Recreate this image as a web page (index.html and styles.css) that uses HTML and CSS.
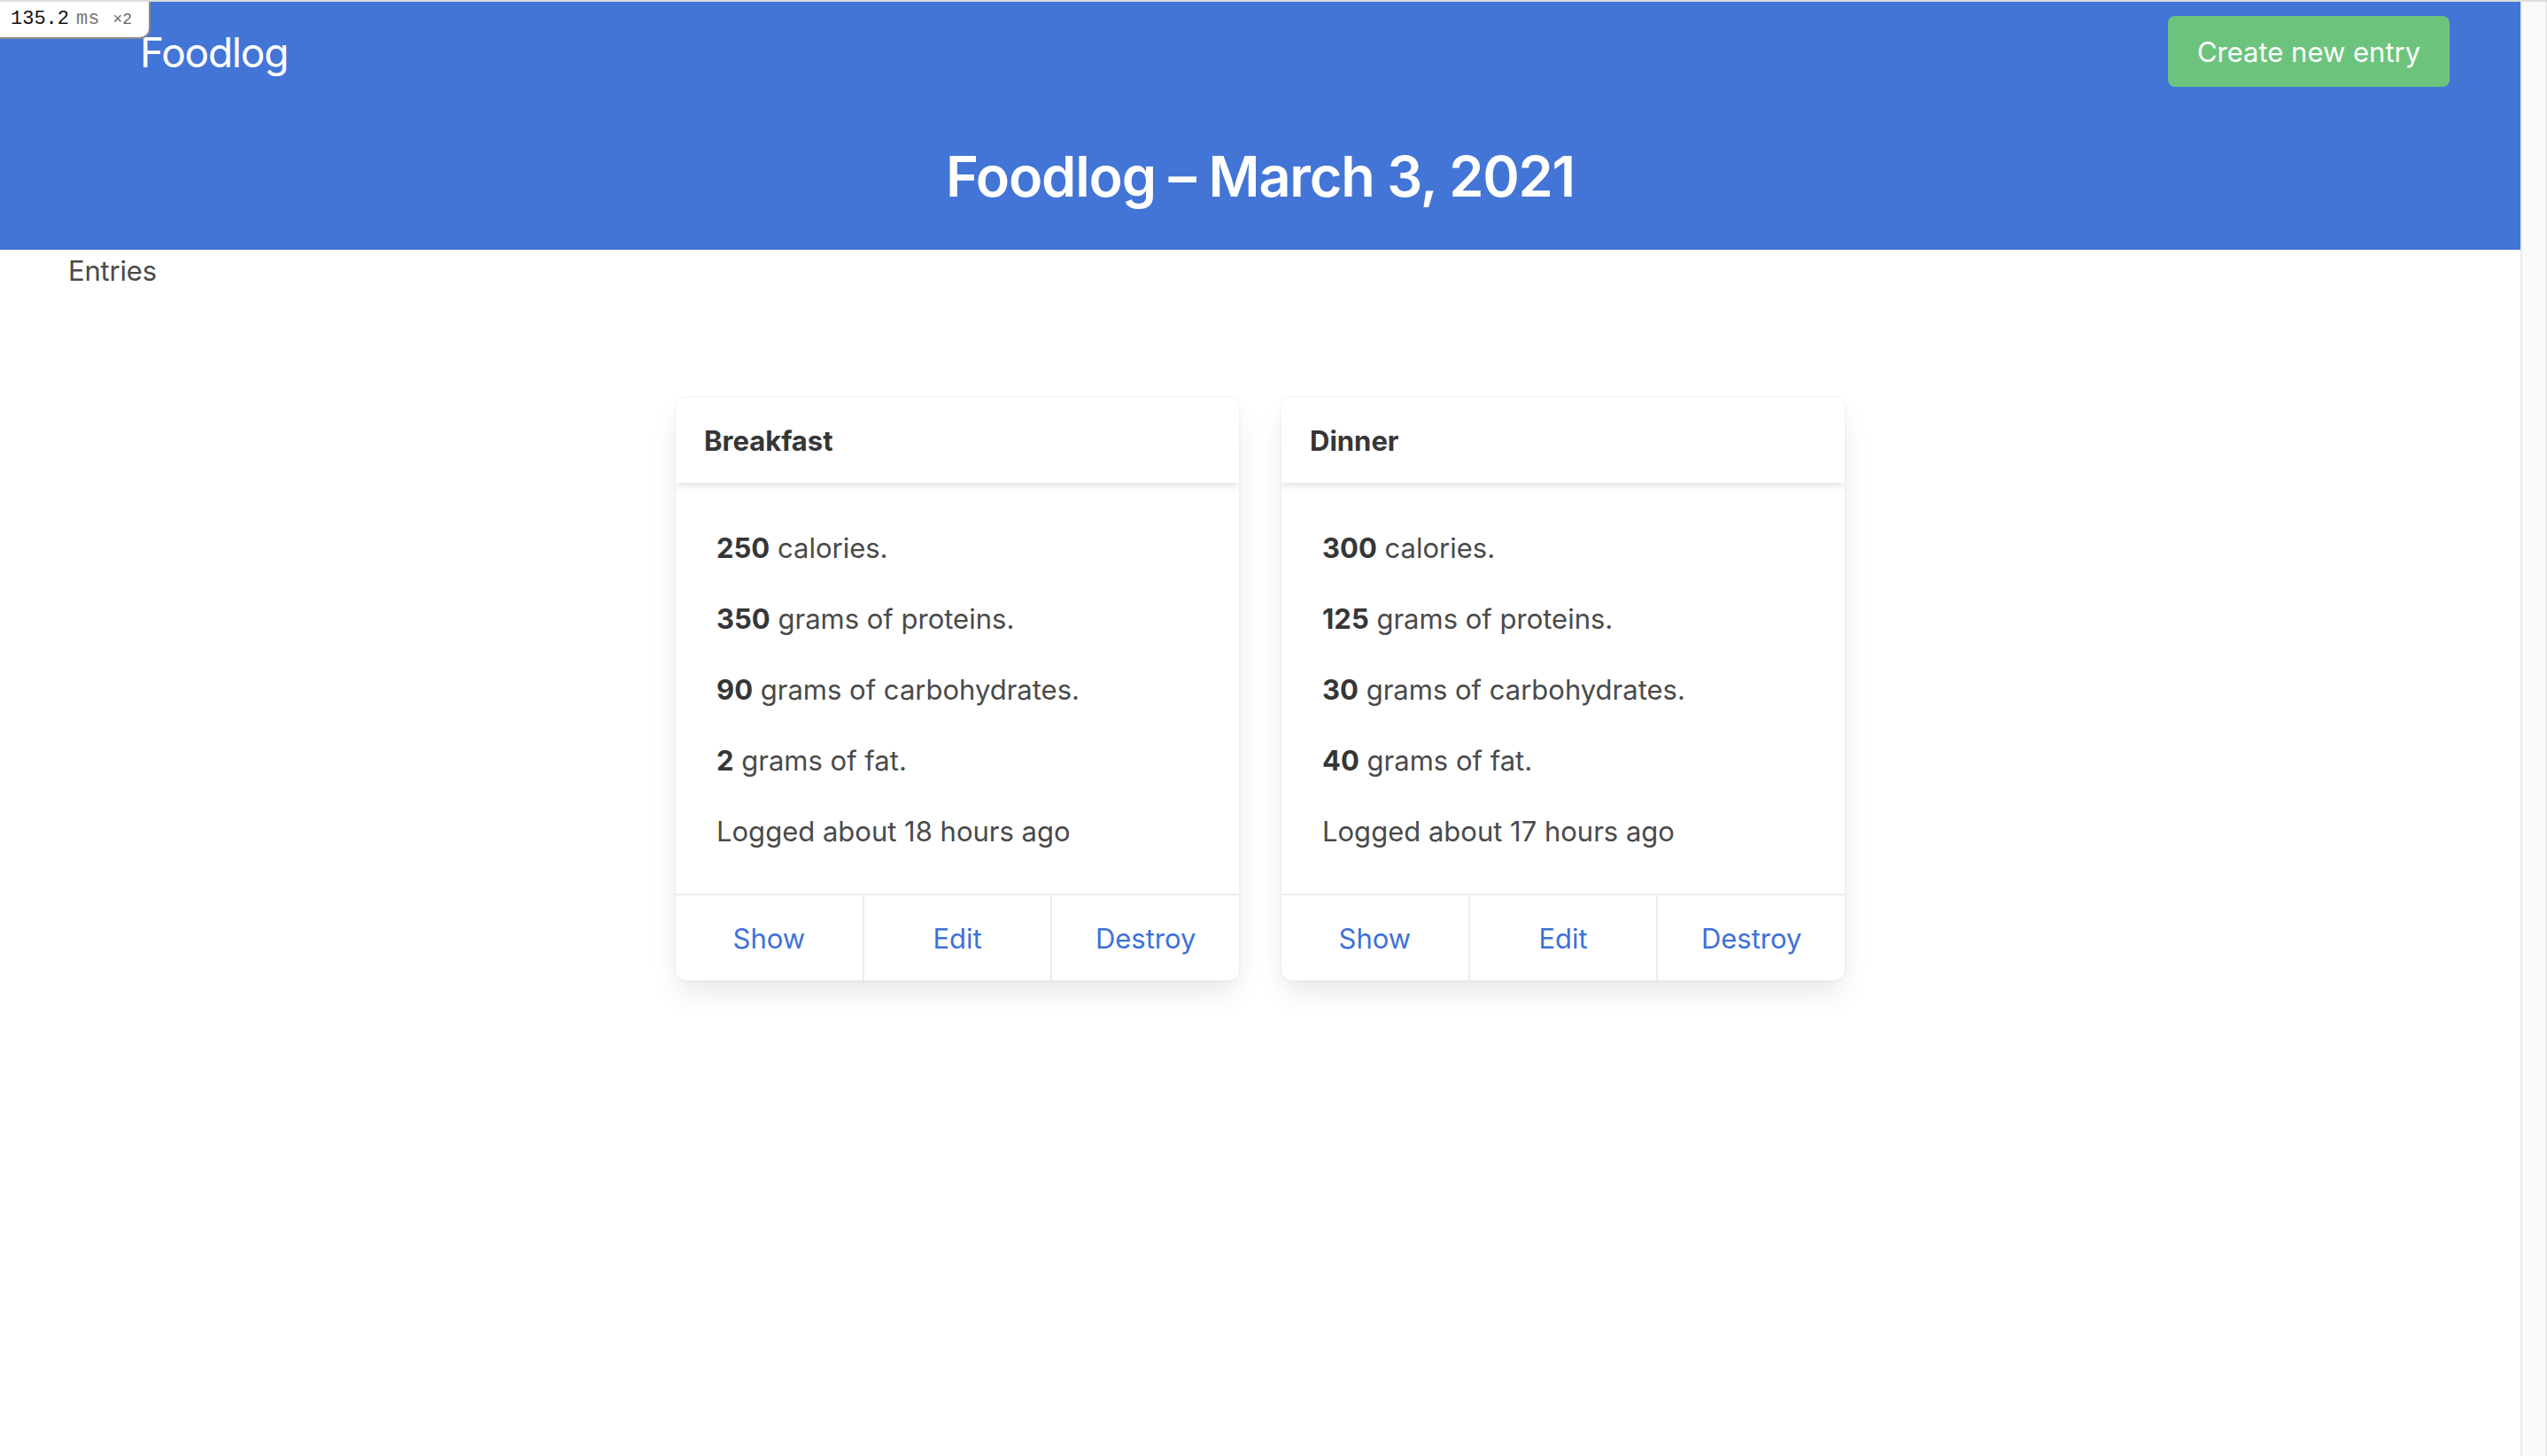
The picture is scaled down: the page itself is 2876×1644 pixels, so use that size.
FILE: index.html
```html
<!DOCTYPE html>
<html lang="en">
<head>
<meta charset="utf-8">
<title>Foodlog</title>
<link rel="stylesheet" href="styles.css">
</head>
<body>
<div class="timer"><span class="ms-val">135.2</span><span class="ms-unit">ms</span><span class="ms-x">×2</span></div>
<div class="page">
  <main class="main">
    <header class="hero">
      <div class="topbar">
        <a class="brand" href="#">Foodlog</a>
        <a class="btn-create" href="#">Create new entry</a>
      </div>
      <h1 class="hero-title">Foodlog – March 3, 2021</h1>
    </header>
    <p class="entries-label">Entries</p>
    <section class="cards">
      <article class="card">
        <div class="card-header">Breakfast</div>
        <div class="card-content">
          <p><strong>250</strong> calories.</p>
          <p><strong>350</strong> grams of proteins.</p>
          <p><strong>90</strong> grams of carbohydrates.</p>
          <p><strong>2</strong> grams of fat.</p>
          <p>Logged about 18 hours ago</p>
        </div>
        <div class="card-footer">
          <a class="footer-item" href="#">Show</a>
          <a class="footer-item" href="#">Edit</a>
          <a class="footer-item" href="#">Destroy</a>
        </div>
      </article>
      <article class="card">
        <div class="card-header">Dinner</div>
        <div class="card-content">
          <p><strong>300</strong> calories.</p>
          <p><strong>125</strong> grams of proteins.</p>
          <p><strong>30</strong> grams of carbohydrates.</p>
          <p><strong>40</strong> grams of fat.</p>
          <p>Logged about 17 hours ago</p>
        </div>
        <div class="card-footer">
          <a class="footer-item" href="#">Show</a>
          <a class="footer-item" href="#">Edit</a>
          <a class="footer-item" href="#">Destroy</a>
        </div>
      </article>
    </section>
  </main>
  <div class="scrollbar"></div>
</div>
</body>
</html>
```

FILE: styles.css
```css
html, body {
  margin: 0;
  padding: 0;
  height: 100%;
}
body {
  font-family: Inter, "Noto Sans", "Liberation Sans", sans-serif;
  color: #4a4a4a;
  background: #ffffff;
  border-top: 2px solid #dcdcdf;
  box-sizing: border-box;
}
.page {
  display: flex;
  min-height: 1642px;
}
.main {
  flex: 1;
  min-width: 0;
}
.scrollbar {
  width: 26px;
  flex: none;
  background: #fafafa;
  border-left: 2px solid #e8e8e8;
  border-right: 2px solid #e8e8e8;
}
.timer {
  position: absolute;
  top: 2px;
  left: 0;
  width: 156px;
  height: 40px;
  background: #fff;
  border-right: 2px solid #8a8a8a;
  border-bottom: 2px solid #8a8a8a;
  border-bottom-right-radius: 12px;
  display: flex;
  align-items: baseline;
  padding: 0 0 0 12px;
  box-sizing: content-box;
  z-index: 10;
  line-height: 40px;
}
.ms-val {
  font-family: "Liberation Mono", monospace;
  font-size: 22px;
  color: #111;
  margin-right: 8px;
}
.ms-unit {
  font-family: "Liberation Mono", monospace;
  font-size: 22px;
  color: #777;
  margin-right: 15px;
}
.ms-x {
  font-family: "Liberation Mono", monospace;
  font-size: 18px;
  color: #666;
}
.hero {
  background: #4375d6;
  height: 280px;
  box-sizing: border-box;
  padding-top: 16px;
}
.topbar {
  display: flex;
  align-items: center;
  justify-content: space-between;
  padding: 0 80px 0 158px;
  height: 80px;
}
.brand {
  color: #fff;
  text-decoration: none;
  font-size: 46px;
  font-weight: 400;
  letter-spacing: -1.2px;
  line-height: 1;
  margin-top: 2px;
}
.btn-create {
  display: flex;
  align-items: center;
  justify-content: center;
  height: 80px;
  width: 318px;
  box-sizing: border-box;
  background: #6cc47c;
  color: #fff;
  text-decoration: none;
  font-size: 31px;
  border-radius: 8px;
}
.hero-title {
  margin: 66px 0 0;
  text-align: center;
  color: #fff;
  font-size: 63px;
  font-weight: 600;
  letter-spacing: -1.2px;
  line-height: 1.125;
}
.entries-label {
  margin: 0;
  padding-left: 77px;
  font-size: 31px;
  line-height: 48px;
  letter-spacing: -0.2px;
  color: #4a4a4a;
}
.cards {
  display: flex;
  justify-content: center;
  gap: 48px;
  margin-top: 119px;
}
.card {
  width: 636px;
  background: #fff;
  border-radius: 12px;
  box-shadow: 0 16px 32px -4px rgba(10, 10, 10, 0.1), 0 0 0 2px rgba(10, 10, 10, 0.02);
  overflow: hidden;
  display: flex;
  flex-direction: column;
}
.card-header {
  height: 96px;
  box-sizing: border-box;
  padding: 0 32px;
  display: flex;
  align-items: center;
  font-size: 31px;
  font-weight: 700;
  color: #363636;
  box-shadow: 0 4px 8px rgba(10, 10, 10, 0.1);
  position: relative;
}
.card-content {
  padding: 50px 48px 46px 46px;
  font-size: 31px;
  line-height: 48px;
}
.card-content p {
  margin: 0 0 32px;
}
.card-content p:last-child {
  margin-bottom: 0;
}
.card-content strong {
  color: #363636;
  font-weight: 700;
}
.card-footer {
  display: flex;
  border-top: 2px solid #ededed;
}
.footer-item {
  flex: 1;
  height: 96px;
  display: flex;
  align-items: center;
  justify-content: center;
  color: #3e71d8;
  text-decoration: none;
  font-size: 31px;
}
.footer-item + .footer-item {
  border-left: 2px solid #ededed;
}
```
